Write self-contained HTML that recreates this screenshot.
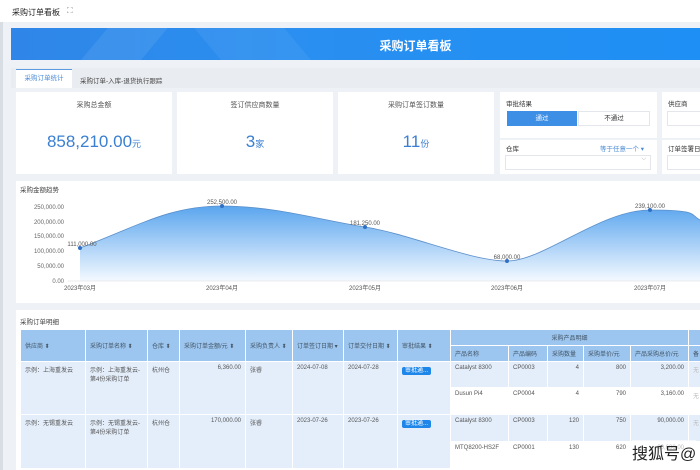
<!DOCTYPE html>
<html><head><meta charset="utf-8"><style>
*{margin:0;padding:0;box-sizing:border-box}
body{width:700px;height:470px;overflow:hidden;background:#eef1f5;font-family:"Liberation Sans","Noto Sans CJK SC",sans-serif;color:#333;position:relative}
.abs{position:absolute}
.top{left:0;top:0;width:700px;height:22px;background:#fff;font-size:8px;color:#222}
.banner{left:11px;top:28px;width:689px;height:32px;background:linear-gradient(90deg,#2f86e8,#2a8ff0 40%,#1e8ff5);overflow:hidden}
.card{background:#fff}
.ct{font-size:7px;color:#555;text-align:center}
.num{color:#3a7fd1;text-align:center;font-size:17px}
.num small{font-size:9px}
table{border-collapse:collapse;font-size:6px;color:#555}
td,th{border:1px solid #fff;font-weight:normal;text-align:left;padding:3px 4px;vertical-align:top}
th{background:#9cc6ef;color:#456;vertical-align:middle}
td{background:#e4eefb}
.w td.p{background:#fff}
.badge{background:#1f86e9;color:#fff;padding:1px 3px;border-radius:2px}
</style></head><body>
<div class="abs top"><span class="abs" style="left:12px;top:7px">采购订单看板</span><span class="abs" style="left:67px;top:6px;color:#888">⛶</span></div>
<div class="abs" style="left:0;top:22px;width:3px;height:448px;background:#d8dde4"></div>
<div class="abs banner">
<div class="abs" style="left:80px;top:-20px;width:60px;height:80px;background:rgba(255,255,255,.08);transform:skewX(-40deg)"></div>
<div class="abs" style="left:200px;top:-20px;width:90px;height:80px;background:rgba(255,255,255,.06);transform:skewX(40deg)"></div>
<div class="abs" style="left:0;top:9px;width:100%;text-align:center;color:#fff;font-size:12px;font-weight:bold;padding-left:120px">采购订单看板</div>
</div>
<div class="abs" style="left:11px;top:68px;width:689px;height:20px;background:#e9ecf0"></div>
<div class="abs" style="left:16px;top:69px;width:56px;height:19px;background:#fff;border-top:1px solid #5c9be0;color:#4a8ad6;font-size:6.5px;text-align:center;line-height:17px">采购订单统计</div>
<div class="abs" style="left:80px;top:75px;font-size:6.5px;color:#444">采购订单-入库-退货执行跟踪</div>

<div class="abs card" style="left:16px;top:92px;width:156px;height:82px"><div class="ct" style="margin-top:8px">采购总金额</div><div class="num" style="margin-top:22px">858,210.00<small>元</small></div></div>
<div class="abs card" style="left:177px;top:92px;width:156px;height:82px"><div class="ct" style="margin-top:8px">签订供应商数量</div><div class="num" style="margin-top:22px">3<small>家</small></div></div>
<div class="abs card" style="left:338px;top:92px;width:156px;height:82px"><div class="ct" style="margin-top:8px">采购订单签订数量</div><div class="num" style="margin-top:22px">11<small>份</small></div></div>
<div class="abs card" style="left:500px;top:92px;width:157px;height:46px">
<div class="abs" style="left:6px;top:6px;font-size:6.5px">审批结果</div>
<div class="abs" style="left:7px;top:19px;width:70px;height:15px;background:#3d8fe6;color:#fff;font-size:6.5px;text-align:center;line-height:15px">通过</div>
<div class="abs" style="left:78px;top:19px;width:72px;height:15px;border:1px solid #e3e6ea;font-size:6.5px;text-align:center;line-height:13px">不通过</div></div>
<div class="abs card" style="left:500px;top:140px;width:157px;height:34px">
<div class="abs" style="left:6px;top:3px;font-size:6.5px">仓库</div>
<div class="abs" style="left:100px;top:3px;font-size:6.5px;color:#4a8ad6">等于任意一个 ▾</div>
<div class="abs" style="left:5px;top:15px;width:146px;height:15px;border:1px solid #e3e6ea;font-size:6px;color:#aaa;text-align:right;padding-right:4px">⌵</div></div>
<div class="abs card" style="left:662px;top:92px;width:38px;height:46px"><div class="abs" style="left:6px;top:6px;font-size:6.5px">供应商</div><div class="abs" style="left:5px;top:19px;width:40px;height:15px;border:1px solid #e3e6ea"></div></div>
<div class="abs card" style="left:662px;top:140px;width:38px;height:34px"><div class="abs" style="left:6px;top:3px;font-size:6.5px;white-space:nowrap">订单签署日</div><div class="abs" style="left:5px;top:15px;width:40px;height:15px;border:1px solid #e3e6ea"></div></div>

<div class="abs card" style="left:16px;top:181px;width:684px;height:122px"></div>
<div class="abs" style="left:20px;top:184px;font-size:6.5px;color:#444">采购金额趋势</div>
<svg class="abs" style="left:0;top:180px" width="700" height="125" font-family="Liberation Sans" font-size="6" fill="#666">
<defs><linearGradient id="g" x1="0" y1="0" x2="0" y2="1"><stop offset="0" stop-color="#5aa5ee"/><stop offset="1" stop-color="#f4f9ff"/></linearGradient></defs>
<g text-anchor="end"><text x="64" y="29">250,000.00</text><text x="64" y="44">200,000.00</text><text x="64" y="58">150,000.00</text><text x="64" y="73">100,000.00</text><text x="64" y="88">50,000.00</text><text x="64" y="103">0.00</text></g>
<path d="M80 68 C140 45,170 26,222 26 S320 40,365 47 S470 81,507 81 S600 30,650 30 S690 35,700 40 L700 101 L80 101Z" fill="url(#g)"/>
<path d="M80 68 C140 45,170 26,222 26 S320 40,365 47 S470 81,507 81 S600 30,650 30 S690 35,700 40" fill="none" stroke="#5b8fc9" stroke-width="0.8"/>
<line x1="68" y1="101" x2="700" y2="101" stroke="#ddd" stroke-width="0.5"/>
<g fill="#2f6fc4"><circle cx="80" cy="68" r="2"/><circle cx="222" cy="26" r="2"/><circle cx="365" cy="47" r="2"/><circle cx="507" cy="81" r="2"/><circle cx="650" cy="30" r="2"/></g>
<g text-anchor="middle" fill="#555"><text x="82" y="66">111,000.00</text><text x="222" y="24">252,500.00</text><text x="365" y="45">181,250.00</text><text x="507" y="79">68,000.00</text><text x="650" y="28">239,100.00</text>
<text x="80" y="110">2023年03月</text><text x="222" y="110">2023年04月</text><text x="365" y="110">2023年05月</text><text x="507" y="110">2023年06月</text><text x="650" y="110">2023年07月</text></g>
</svg>

<div class="abs card" style="left:16px;top:310px;width:684px;height:160px"></div>
<div class="abs" style="left:20px;top:316px;font-size:6.5px;color:#444">采购订单明细</div>
<table class="abs" style="left:20px;top:329px;width:700px;table-layout:fixed">
<colgroup><col style="width:65px"><col style="width:62px"><col style="width:32px"><col style="width:66px"><col style="width:47px"><col style="width:51px"><col style="width:54px"><col style="width:53px"><col style="width:58px"><col style="width:39px"><col style="width:36px"><col style="width:47px"><col style="width:58px"><col style="width:33px"></colgroup>
<tr style="height:16px"><th rowspan="2">供应商 ⬍</th><th rowspan="2">采购订单名称 ⬍</th><th rowspan="2">仓库 ⬍</th><th rowspan="2">采购订单金额/元 ⬍</th><th rowspan="2">采购负责人 ⬍</th><th rowspan="2">订单签订日期 ▾</th><th rowspan="2">订单交付日期 ⬍</th><th rowspan="2">审批结果 ⬍</th><th colspan="5" style="text-align:center">采购产品明细</th><th></th></tr>
<tr style="height:16px"><th>产品名称</th><th>产品编码</th><th>采购数量</th><th>采购单价/元</th><th>产品采购总价/元</th><th>备</th></tr>
<tr style="height:26px"><td rowspan="2">示例：上海重发云</td><td rowspan="2">示例：上海重发云-第4份采购订单</td><td rowspan="2">杭州仓</td><td rowspan="2" style="text-align:right">6,360.00</td><td rowspan="2">张睿</td><td rowspan="2">2024-07-08</td><td rowspan="2">2024-07-28</td><td rowspan="2"><span class="badge">审批通...</span></td><td>Catalyst 8300</td><td>CP0003</td><td style="text-align:right">4</td><td style="text-align:right">800</td><td style="text-align:right">3,200.00</td><td style="color:#bbb">无</td></tr>
<tr class="w" style="height:27px"><td class="p">Dusun Pi4</td><td class="p">CP0004</td><td class="p" style="text-align:right">4</td><td class="p" style="text-align:right">790</td><td class="p" style="text-align:right">3,160.00</td><td class="p" style="color:#bbb">无</td></tr>
<tr style="height:27px"><td rowspan="2">示例：无锡重发云</td><td rowspan="2">示例：无锡重发云-第4份采购订单</td><td rowspan="2">杭州仓</td><td rowspan="2" style="text-align:right">170,000.00</td><td rowspan="2">张睿</td><td rowspan="2">2023-07-26</td><td rowspan="2">2023-07-26</td><td rowspan="2"><span class="badge">审批通...</span></td><td>Catalyst 8300</td><td>CP0003</td><td style="text-align:right">120</td><td style="text-align:right">750</td><td style="text-align:right">90,000.00</td><td style="color:#bbb">无</td></tr>
<tr class="w" style="height:27px"><td class="p">MTQ8200-HS2F</td><td class="p">CP0001</td><td class="p" style="text-align:right">130</td><td class="p" style="text-align:right">620</td><td class="p" style="text-align:right">80,600.00</td><td class="p"></td></tr>
</table>
<div class="abs" style="left:632px;top:440px;font-size:16px;color:#222;background:rgba(255,255,255,.6)">搜狐号@</div>
</body></html>
